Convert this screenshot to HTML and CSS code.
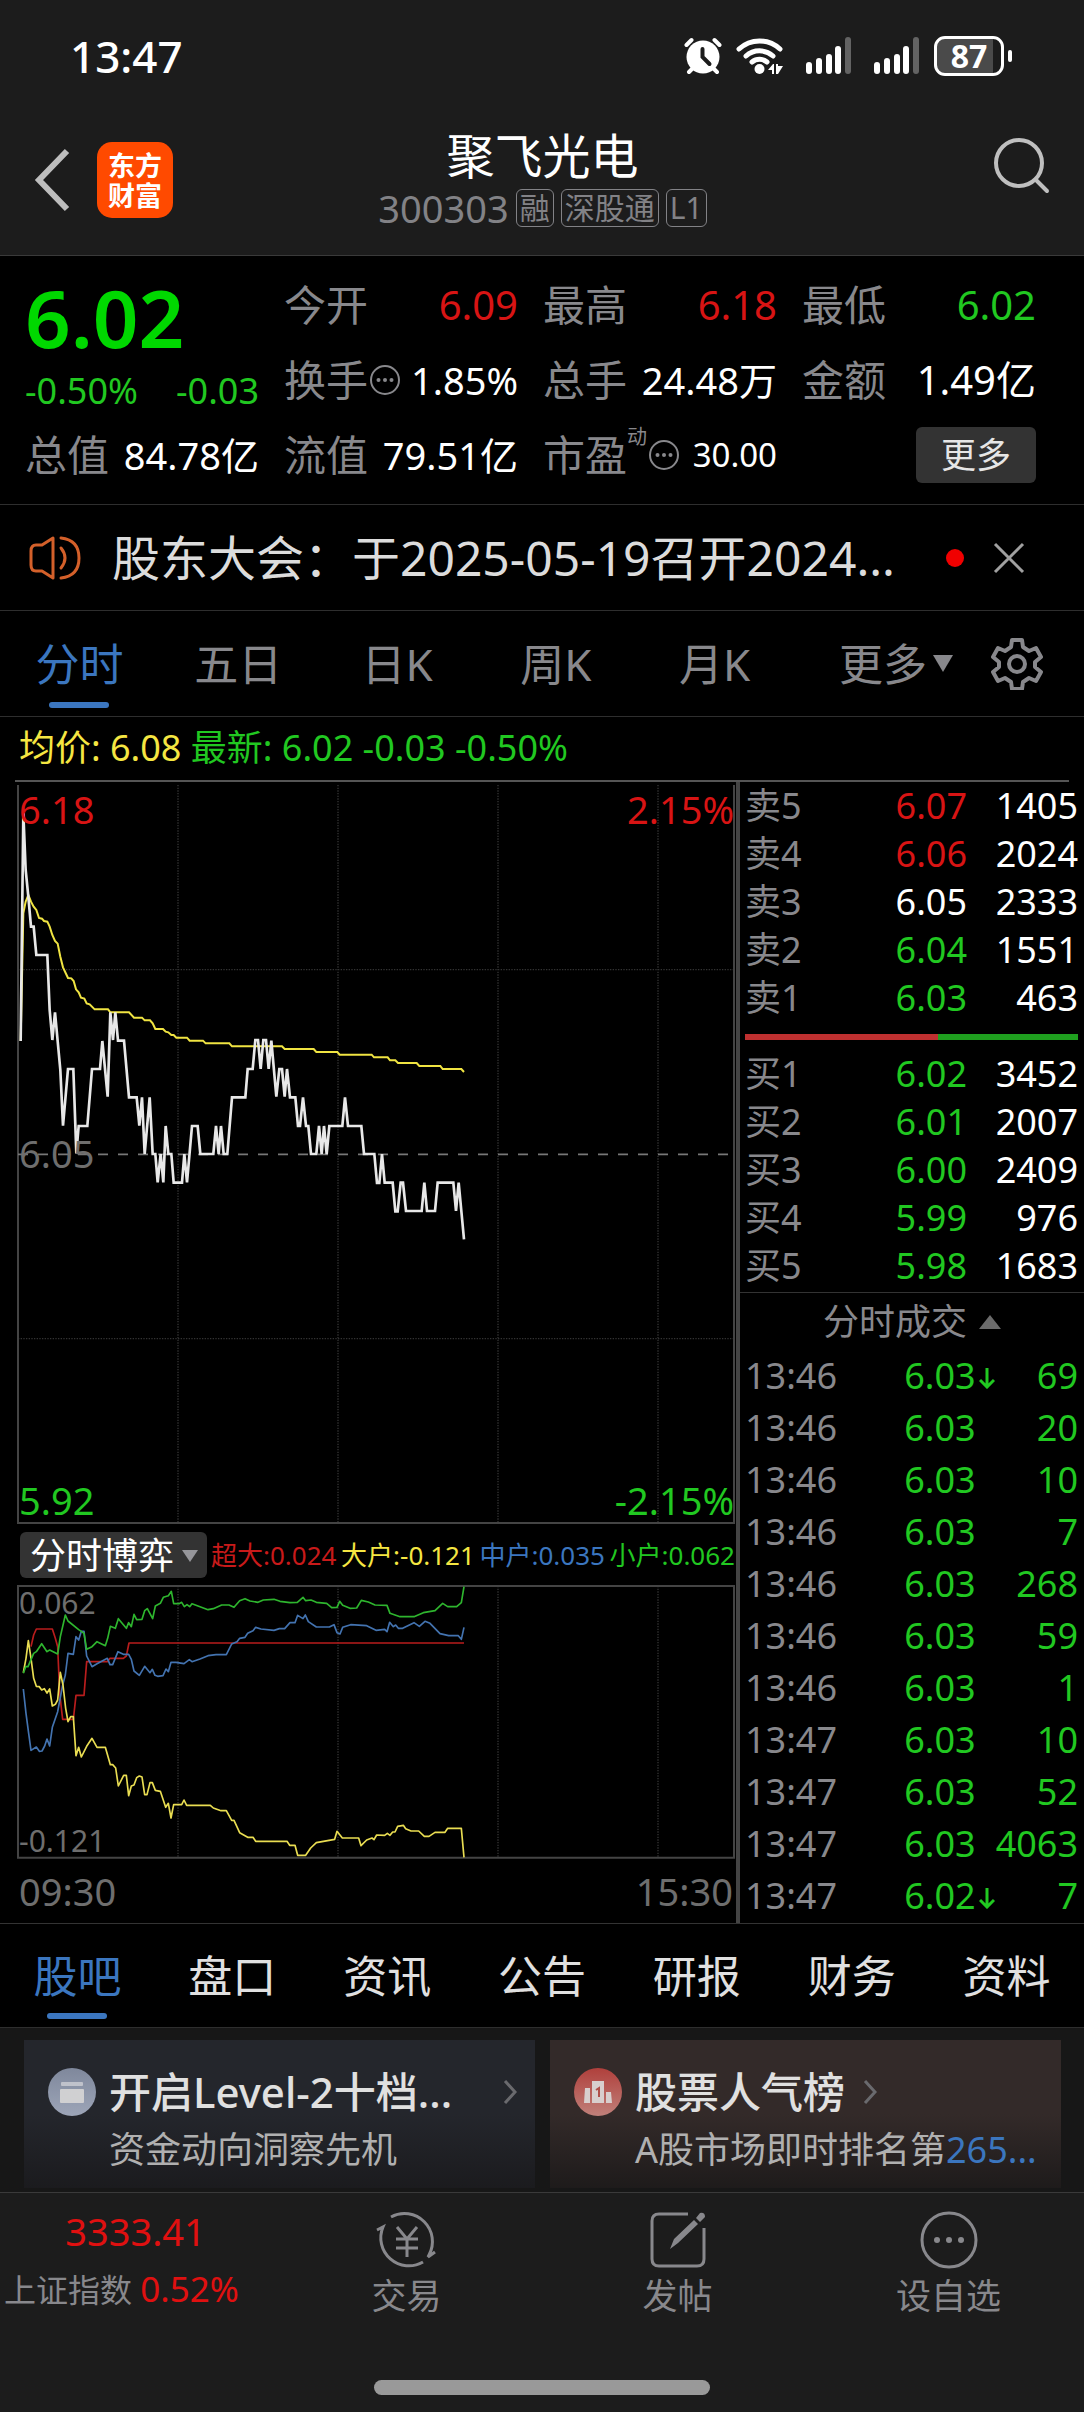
FILE: index.html
```html
<!DOCTYPE html>
<html lang="zh-CN">
<head>
<meta charset="utf-8">
<meta name="viewport" content="width=device-width, initial-scale=1">
<title>聚飞光电 300303</title>
<link rel="stylesheet" href="styles.css">
</head>
<body>
<div class="top">
  <div class="status">
    <time class="clock">13:47</time>
    <div class="status-icons">
      <svg width="38" height="38" viewBox="0 0 38 38" fill="none" stroke="#fff" stroke-width="4" stroke-linecap="round"><circle cx="19" cy="20" r="16.500" fill="#fff" stroke="none"/><path d="M2.500 8 7.500 3M35.500 8 30.500 3M8 32 5 35M30 32l3 3"/><path stroke="#1c1c1c" d="M18.500 12v8l7 7"/></svg>
      <svg width="48" height="38" viewBox="0 0 48 38" fill="none" stroke="#fff" stroke-width="5" stroke-linecap="round"><path d="M3 12a30 30 0 0 1 41 0M10 19a20 20 0 0 1 27 0M16 25a12 12 0 0 1 15 0"/><circle cx="23.500" cy="32" r="5" fill="#fff" stroke="none"/><path fill="#fff" stroke="none" d="M32 33l5-6h1v10h-2v-4zM40 27h2v2h5l-5 8h-2z"/></svg>
      <svg class="signal" width="46" height="38" viewBox="0 0 46 38" fill="#fff"><rect y="25" width="6" height="12" rx="3"/><rect x="10" y="21" width="6" height="16" rx="3"/><rect x="20" y="17" width="6" height="20" rx="3"/><rect x="29" y="9" width="6" height="28" rx="3"/><rect x="39" width="6" height="37" rx="3" fill="#636363"/></svg>
      <svg class="signal" width="46" height="38" viewBox="0 0 46 38" fill="#fff"><rect y="25" width="6" height="12" rx="3"/><rect x="10" y="21" width="6" height="16" rx="3"/><rect x="20" y="17" width="6" height="20" rx="3"/><rect x="29" y="9" width="6" height="28" rx="3"/><rect x="39" width="6" height="37" rx="3" fill="#636363"/></svg>
      <div class="battery">87</div>
    </div>
  </div>
  <header class="header">
    <div class="header-left">
      <button class="plain" aria-label="返回"><svg width="36" height="64" viewBox="0 0 36 64" fill="none" stroke="#bdbdbd" stroke-width="6"><path d="M33 3 5 32l28 29"/></svg></button>
      <div class="logo">东方<br>财富</div>
    </div>
    <div class="heading">
      <h1>聚飞光电</h1>
      <div class="code"><span>300303</span><span class="tag">融</span><span class="tag">深股通</span><span class="tag">L1</span></div>
    </div>
    <button class="plain search" aria-label="搜索"><svg width="58" height="58" viewBox="0 0 58 58" fill="none" stroke="#bfbfbf" stroke-width="4" stroke-linecap="round"><circle cx="26" cy="27" r="23"/><path d="M43 44l11 11"/></svg></button>
  </header>
</div>

<section class="quote">
  <div class="last">
    <strong>6.02</strong>
    <div class="change"><span>-0.50%</span><span>-0.03</span></div>
  </div>
  <div class="cell"><span>今开</span><b class="v40 up">6.09</b></div>
  <div class="cell"><span>最高</span><b class="v40 up">6.18</b></div>
  <div class="cell"><span>最低</span><b class="v40 down">6.02</b></div>
  <div class="cell"><span>换手</span><svg class="info" width="32" height="32" viewBox="0 0 32 32"><circle cx="16" cy="16" r="14" fill="none" stroke="#88888c" stroke-width="2"/><g fill="#88888c"><circle cx="9.500" cy="16" r="2"/><circle cx="16" cy="16" r="2"/><circle cx="22.500" cy="16" r="2"/></g></svg><b class="v38">1.85%</b></div>
  <div class="cell"><span>总手</span><b class="v38">24.48万</b></div>
  <div class="cell"><span>金额</span><b class="v40">1.49亿</b></div>
  <div class="cell"><span>总值</span><b class="v38">84.78亿</b></div>
  <div class="cell"><span>流值</span><b class="v38">79.51亿</b></div>
  <div class="cell"><span>市盈</span><sup>动</sup><svg class="info" width="32" height="32" viewBox="0 0 32 32"><circle cx="16" cy="16" r="14" fill="none" stroke="#88888c" stroke-width="2"/><g fill="#88888c"><circle cx="9.500" cy="16" r="2"/><circle cx="16" cy="16" r="2"/><circle cx="22.500" cy="16" r="2"/></g></svg><b class="v33">30.00</b></div>
  <div class="cell"><button class="more">更多</button></div>
</section>

<section class="notice">
  <svg width="52" height="46" viewBox="0 0 52 46" fill="none" stroke="#d4602a" stroke-width="3" stroke-linejoin="round" stroke-linecap="round"><path d="M24 3v40L13 36H7q-5 0-5-6V16q0-6 5-6h6z"/><path d="M32 13q8 10 0 20M32 3q18 2 18 20T32 43"/></svg>
  <a href="#notice">股东大会：于2025-05-19召开2024...</a>
  <i class="dot"></i>
  <button class="plain" aria-label="关闭"><svg width="32" height="32" viewBox="0 0 32 32" stroke="#a0a0a0" stroke-width="3"><path d="M2 2l28 28M30 2 2 30"/></svg></button>
</section>

<nav class="periods">
  <button class="tab active">分时</button>
  <button class="tab">五日</button>
  <button class="tab">日K</button>
  <button class="tab">周K</button>
  <button class="tab">月K</button>
  <button class="tab menu">更多<svg width="20" height="17" viewBox="0 0 20 17"><path d="M0 0h20L10 17z" fill="#88888c"/></svg></button>
  <button class="plain gear" aria-label="设置"><svg width="52" height="52" viewBox="0 0 52 52" fill="none" stroke="#88888c" stroke-width="4" stroke-linejoin="round"><path d="M21 2h10l1 7 6 4 7-3 5 9-6 5v5l6 5-5 9-7-3-6 4-1 7H21l-1-7-6-4-7 3-5-9 6-5v-5l-6-5 5-9 7 3 6-4z"/><circle cx="26" cy="26" r="8"/></svg></button>
</nav>

<div class="summary"><span class="avg">均价: 6.08</span> 最新: 6.02 -0.03 -0.50%</div>

<main class="market">
  <div class="charts">
    <figure class="plot price">
      <svg viewBox="51 15 2154 2217" fill="none">
        <g stroke="#333" stroke-width="4" stroke-dasharray="4 4"><path d="M534 15V2228M1014 15V2228M1494 15V2228M1974 15V2228M54 569H2202M54 1676H2202"/></g>
        <path d="M54 15V2229H2202V15" stroke="#444" stroke-width="6"/>
        <path d="M54 1123H2202" stroke="#777" stroke-width="5" stroke-dasharray="30 30"/>
        <path d="M62 783 70 400 77 365 85 345 93 365 101 380 109 390 117 414 126 416 132 423 142 425 149 440 157 465 165 483 173 491 181 530 189 562 204 594 214 595 221 603 228 628 236 637 243 653 253 656 260 670 269 673 284 688H324L331 697H387L402 713H426L434 721H450L458 730 466 747H489L497 755 505 757 514 765H521L529 773H561L569 782H609L617 790H688L696 799H846L854 807H941L949 816H1012L1019 824H1115L1122 832H1163L1170 841H1186L1194 849H1250L1258 858H1321L1328 867H1384L1392 876" stroke="#f0e442" stroke-width="6"/>
        <path d="M62 783 70 100 77 270 85 350 93 440H101L109 525H142L149 690 157 780 165 697 181 870 189 1037 204 867H220L229 1120 236 1038H262L276 867H300L307 783 323 950 331 697 339 780 346 697 354 782H372L387 952H410L418 1037 426 952 434 1122 449 952 458 1122H466L473 1207 482 1122 490 1207 497 1038 505 1122H514L521 1208H546L553 1122 561 1207 576 1038H593L601 1122H640L648 1038 656 1122 663 1038 671 1122H682L696 952H736L743 867H758L766 780H774L782 867 790 780H798L806 867 814 782 829 950 838 867H846L854 950 861 867 870 952H886L894 1038H900L909 952 918 1038H925L933 1122H949L957 1038 965 1122 972 1038 980 1122 988 1038H1027L1035 952 1044 1038H1084L1092 1122H1123L1131 1209H1138L1146 1122 1154 1208H1178L1186 1294H1193L1202 1208H1209L1218 1293H1265L1273 1208 1281 1293H1305L1313 1208H1360L1368 1293 1376 1208 1392 1378" stroke="#e8e8e8" stroke-width="8"/>
      </svg>
      <span class="label tl up">6.18</span><span class="label tr up">2.15%</span>
      <span class="label ml">6.05</span>
      <span class="label bl down">5.92</span><span class="label br down">-2.15%</span>
    </figure>
    <div class="flow">
      <label class="picker"><select aria-label="指标"><option>分时博弈</option></select><svg width="16" height="12" viewBox="0 0 16 12"><path d="M0 0h16L8 12z" fill="#96969a"/></svg></label>
      <div class="flow-values"><span class="red">超大:0.024</span><span class="avg">大户:-0.121</span><span class="blue">中户:0.035</span><span class="down">小户:0.062</span></div>
    </div>
    <figure class="plot game">
      <svg viewBox="21 135 2154 822" fill="none">
        <g stroke="#333" stroke-width="4" stroke-dasharray="4 4"><path d="M504 138V952M984 138V952M1464 138V952M1944 138V952"/></g>
        <path d="M24 138H2172V953H24Z" stroke="#444" stroke-width="6"/>
        <g stroke-width="5" stroke-linejoin="round">
          <path stroke="#b91d1d" d="M63 320 71 285 79 267H127L136 295 143 320 149 460 158 538H190L198 466H222L230 365H292L300 355H340L349 348 357 309H1362"/>
          <path stroke="#4373b0" d="M40 447 48 520 56 580 63 631 79 621 88 634 96 633 104 618 111 597 119 618 127 562 143 515 158 435 166 405 174 340 190 343 198 290 206 300 214 274 222 274 230 348 246 380 261 371 292 355 300 374H308L324 335 340 343H356L364 358 372 393 388 406 404 379 420 398 427 388 435 406 443 409 459 407 468 387 475 395 483 367H498L522 371 538 359 546 365 570 357 594 347 618 344H649L665 312 681 305 689 295 705 292 713 280 729 272 737 262 753 267 792 271 808 266 824 266 840 248H855L863 226 879 236 886 225 895 245 919 261H958L972 254 981 278 990 282 998 262 1022 254 1070 257 1098 271 1124 268 1131 275 1139 247 1150 260 1157 255 1165 265 1178 265 1212 248 1228 259 1245 244 1260 250 1290 281 1316 287 1345 287 1354 298 1362 262"/>
          <path stroke="#e9dd52" d="M40 398 48 355 55 302 63 355 71 415 79 439 88 440 95 450 103 446 111 459 119 447 127 498 136 493 143 480 151 397 159 435 167 505 174 545 182 530H190L198 647 206 622 214 651 230 619 246 595 261 622H286L301 674H308L317 684 325 738 341 706H349L356 767 364 738 372 735 380 713 388 708 396 711 404 764H411L420 728H427L436 751 451 754 467 802 475 790 483 834 491 794H515L522 780 530 796H601L610 804 633 812H649L665 841H672L689 878 713 892 729 892 737 904H831L839 916H855L863 946H887L902 924 919 908 974 898 981 874 997 894H1046L1053 917 1070 900 1086 894 1092 899 1100 885 1124 886 1132 880 1140 886 1148 876 1155 876 1163 859 1180 856 1187 866 1203 873H1226L1243 889 1257 889 1275 877H1305L1313 865H1354L1362 952"/>
          <path stroke="#2eb52e" d="M40 400 47 380H54L71 340 79 335 95 311 111 335 119 330 143 342 151 290 166 225 174 243 206 269 214 274 222 280 230 328 246 320 261 305 286 317 293 295 301 259 316 265 325 236 349 265 356 248 364 260 372 223 380 239 396 238 404 212 412 206 428 236 436 198 451 190 460 172 475 167 484 154 491 191H507L515 187 523 200 531 194 539 200 546 191 562 197 594 209 610 206 635 195 657 195 672 202 689 182 705 176 720 183 744 187 760 180 792 178 810 184 840 188 862 187 879 172 887 182 903 180 919 187 950 190 965 203 981 202 989 184 998 196 1020 205 1040 204 1054 181 1075 186 1095 195 1131 196 1140 220 1170 230 1212 230 1240 218 1275 212 1298 190 1313 200 1340 200 1354 188 1362 140"/>
        </g>
      </svg>
      <span class="label small tl">0.062</span><span class="label small bl">-0.121</span>
    </figure>
    <div class="hours"><span>09:30</span><span>15:30</span></div>
  </div>

  <aside class="book">
    <table class="depth">
      <tr><th>卖5</th><td class="up">6.07</td><td>1405</td></tr>
      <tr><th>卖4</th><td class="up">6.06</td><td>2024</td></tr>
      <tr><th>卖3</th><td>6.05</td><td>2333</td></tr>
      <tr><th>卖2</th><td class="down">6.04</td><td>1551</td></tr>
      <tr><th>卖1</th><td class="down">6.03</td><td>463</td></tr>
    </table>
    <div class="ratio"><i style="width:58%"></i></div>
    <table class="depth">
      <tr><th>买1</th><td class="down">6.02</td><td>3452</td></tr>
      <tr><th>买2</th><td class="down">6.01</td><td>2007</td></tr>
      <tr><th>买3</th><td class="down">6.00</td><td>2409</td></tr>
      <tr><th>买4</th><td class="down">5.99</td><td>976</td></tr>
      <tr><th>买5</th><td class="down">5.98</td><td>1683</td></tr>
    </table>
    <button class="deals-title">分时成交<svg width="22" height="14" viewBox="0 0 22 14"><path d="M11 0l11 14H0z" fill="#6b6b6b"/></svg></button>
    <table class="deals">
      <tr><th>13:46</th><td>6.03<svg width="16" height="22" viewBox="0 0 16 22"><path d="M8 1v18M1 13l7 7 7-7"/></svg></td><td>69</td></tr>
      <tr><th>13:46</th><td>6.03</td><td>20</td></tr>
      <tr><th>13:46</th><td>6.03</td><td>10</td></tr>
      <tr><th>13:46</th><td>6.03</td><td>7</td></tr>
      <tr><th>13:46</th><td>6.03</td><td>268</td></tr>
      <tr><th>13:46</th><td>6.03</td><td>59</td></tr>
      <tr><th>13:46</th><td>6.03</td><td>1</td></tr>
      <tr><th>13:47</th><td>6.03</td><td>10</td></tr>
      <tr><th>13:47</th><td>6.03</td><td>52</td></tr>
      <tr><th>13:47</th><td>6.03</td><td>4063</td></tr>
      <tr><th>13:47</th><td>6.02<svg width="16" height="22" viewBox="0 0 16 22"><path d="M8 1v18M1 13l7 7 7-7"/></svg></td><td>7</td></tr>
    </table>
  </aside>
</main>

<nav class="sections">
  <button class="tab active">股吧</button>
  <button class="tab">盘口</button>
  <button class="tab">资讯</button>
  <button class="tab">公告</button>
  <button class="tab">研报</button>
  <button class="tab">财务</button>
  <button class="tab">资料</button>
</nav>

<section class="cards">
  <a class="card cool" href="#level2">
    <svg width="48" height="48" viewBox="0 0 48 48"><defs><linearGradient id="cool" x2="0" y2="1"><stop stop-color="#7f889c"/><stop offset="1" stop-color="#9da5b8"/></linearGradient></defs><circle cx="24" cy="24" r="24" fill="url(#cool)"/><rect x="13" y="14" width="22" height="4" rx="1" fill="#bfc2cb"/><rect x="12" y="21" width="24" height="14" rx="1" fill="#d0d0d2"/></svg>
    <div class="card-text"><h2><span>开启Level-2十档...</span><svg class="end" width="14" height="26" viewBox="0 0 14 26"><path d="M2 2l10 11L2 24"/></svg></h2><p>资金动向洞察先机</p></div>
  </a>
  <a class="card warm" href="#rank">
    <svg width="48" height="48" viewBox="0 0 48 48"><defs><linearGradient id="warm" x2="0" y2="1"><stop stop-color="#b0403c"/><stop offset="1" stop-color="#c0807a"/></linearGradient></defs><circle cx="24" cy="24" r="24" fill="url(#warm)"/><path d="M11 20h5v15h-6zM18 13h12v22H18zM32 24h5l1 11h-6z" fill="#d8cfce"/><path d="M22 22l3-2v9" fill="none" stroke="#b0504a" stroke-width="2"/></svg>
    <div class="card-text"><h2><span>股票人气榜</span><svg width="14" height="26" viewBox="0 0 14 26"><path d="M2 2l10 11L2 24"/></svg></h2><p>A股市场即时排名第<span class="blue">265...</span></p></div>
  </a>
</section>

<footer class="dock">
  <a class="index" href="#index"><b>3333.41</b><span>上证指数 <em>0.52%</em></span></a>
  <a class="action" href="#trade"><svg width="64" height="60" viewBox="0 0 64 60" fill="none" stroke="#88888c" stroke-width="3"><path d="M16 7a28 28 0 0 1 38 38l-1 2 7-5M48 52A28 28 0 0 1 8 17l-6 3"/><path d="M22 17l10 12 10-12M32 29v18M21 29h22M21 38h22"/></svg>交易</a>
  <a class="action" href="#post"><svg width="64" height="60" viewBox="0 0 64 60" fill="none" stroke="#88888c" stroke-width="3"><path d="M42 4H13q-7 0-7 7v38q0 7 7 7h38q7 0 7-7V18"/><path fill="#88888c" stroke="none" d="M24 39l4-10 20-19 4 4-20 19zM50 8l4-5q5-1 5 4l-5 5z"/></svg>发帖</a>
  <a class="action" href="#watch"><svg width="64" height="60" viewBox="0 0 64 60"><circle cx="32" cy="30" r="27" fill="none" stroke="#88888c" stroke-width="3"/><g fill="#88888c"><circle cx="20" cy="30" r="3"/><circle cx="32" cy="30" r="3"/><circle cx="44" cy="30" r="3"/></g></svg>设自选</a>
  <div class="home"></div>
</footer>
</body>
</html>
```
FILE: styles.css
```css
* { box-sizing: border-box; }

body {
  margin: 0;
  background: #000;
  color: #fff;
  font-family: "Noto Sans", "Noto Sans CJK SC", sans-serif;
  font-size: 36px;
  line-height: 48px;
}

h1, h2, p, figure { margin: 0; font-weight: 400; }
b, em, i, th { font-weight: 400; font-style: normal; }
a { color: inherit; text-decoration: none; }
svg { display: block; flex: none; }
table { width: 100%; border-collapse: collapse; table-layout: fixed; }
th, td { padding: 0; text-align: right; }
th { text-align: left; color: #88888c; }

button, select {
  border: 0;
  padding: 0;
  background: none;
  color: inherit;
  font: inherit;
}
.plain { display: block; }

.up { color: #d81414; }
.down { color: #21c821; }
.avg { color: #f5e642; }
.blue { color: #3b76bf; }
.red { color: #c81a1a; }

/* Status bar and title */
.top { background: #1c1c1c; border-bottom: 1px solid #3a3a3a; }
.status {
  display: flex;
  align-items: center;
  justify-content: space-between;
  height: 112px;
  padding: 0 80px 0 70px;
}
.clock { font-size: 44px; font-weight: 500; }
.status-icons { display: flex; align-items: center; gap: 14px; }
.signal { margin-left: 8px; }
.battery {
  position: relative;
  width: 70px;
  height: 40px;
  border: 3px solid #fff;
  border-radius: 11px;
  background: linear-gradient(90deg, #4a4a4a 88%, #1c1c1c 88%);
  font-size: 32px;
  font-weight: 700;
  line-height: 34px;
  text-align: center;
}
.battery::after {
  content: "";
  position: absolute;
  top: 11px;
  right: -11px;
  width: 4px;
  height: 12px;
  border-radius: 2px;
  background: #fff;
}
.header {
  display: grid;
  grid-template-columns: 1fr auto 1fr;
  height: 143px;
  padding: 16px 33px 0 34px;
}
.header-left { display: flex; align-items: center; gap: 27px; height: 104px; }
.logo {
  width: 76px;
  padding: 8px 0;
  border-radius: 15px;
  background: #ff4a00;
  font-family: "Noto Sans CJK SC", sans-serif;
  font-size: 27px;
  font-weight: 700;
  line-height: 30px;
  text-align: center;
}
.heading { text-align: center; }
h1 { font-size: 48px; line-height: 56px; }
.code {
  display: flex;
  align-items: center;
  gap: 7px;
  color: #828286;
  font-size: 38px;
}
.tag {
  padding: 0 3px;
  border: 1px solid #828286;
  border-radius: 6px;
  font-size: 30px;
  line-height: 36px;
}
.search { justify-self: end; padding-top: 8px; align-self: start; }

/* Quote figures */
.quote {
  display: grid;
  grid-template-columns: repeat(4, minmax(0, 1fr));
  grid-template-rows: repeat(3, 75px);
  column-gap: 25px;
  padding: 11px 48px 12px 25px;
  border-bottom: 1px solid #2e2e2e;
}
.last { grid-row: span 2; color: #21c821; }
.last strong {
  display: block;
  color: #00d800;
  font-size: 80px;
  font-weight: 600;
  line-height: 100px;
}
.change { display: flex; justify-content: space-between; }
.cell { display: flex; align-items: center; }
.cell > span { color: #88888c; font-size: 42px; }
.cell b { margin-left: auto; }
.cell sup {
  align-self: flex-start;
  color: #88888c;
  font-size: 20px;
  line-height: 40px;
}
.info { margin-left: 1px; }
.v40 { font-size: 40px; }
.v38 { font-size: 38px; }
.v33 { font-size: 33px; }
.more {
  width: 120px;
  margin-left: auto;
  border-radius: 6px;
  background: #333;
  color: #e6e6e6;
  font-size: 35px;
  line-height: 56px;
}

/* Notice */
.notice {
  display: flex;
  align-items: center;
  height: 106px;
  padding: 0 59px 0 29px;
  border-bottom: 1px solid #2e2e2e;
}
.notice a { flex: 1; margin-left: 31px; color: #dcdcdc; font-size: 48px; white-space: nowrap; }
.dot { width: 18px; height: 18px; margin-right: 29px; border-radius: 50%; background: #f00000; }

/* Tab bars */
.periods, .sections { display: flex; border-bottom: 1px solid #2e2e2e; }
.periods { padding-right: 41px; color: #88888c; }
.periods .gear { margin: auto 0 auto 25px; }
.tab {
  position: relative;
  display: flex;
  flex: 1;
  align-items: center;
  justify-content: center;
  height: 105px;
  font-size: 44px;
  white-space: nowrap;
}
.tab.menu { justify-content: flex-end; padding-right: 13px; }
.tab svg { margin-left: 6px; }
.tab.active { color: #3b76bf; }
.tab.active::after {
  content: "";
  position: absolute;
  bottom: 8px;
  left: calc(50% - 30px);
  width: 60px;
  height: 6px;
  border-radius: 3px;
  background: #3b76bf;
}
.sections { color: #e0e0e0; }
.sections .tab { height: 103px; }

.summary {
  margin: 0 15px;
  padding: 7px 4px 8px;
  border-bottom: 2px solid #555;
  color: #21c821;
}

/* Charts and order book */
.market {
  display: grid;
  grid-template-columns: 740fr 344fr;
  border-bottom: 1px solid #333;
}
.charts { padding: 3px 1px 0 17px; border-right: 4px solid #444; }
.plot { position: relative; }
.plot svg { width: 100%; height: auto; }
.label { position: absolute; font-size: 38px; }
.label.small { font-size: 30px; line-height: 36px; }
.label:not(.up, .down) { color: #6e6e6e; }
.tl { top: 0; left: 2px; }
.tr { top: 0; right: 1px; }
.ml { top: calc(50% - 26px); left: 2px; }
.bl { bottom: 0; left: 2px; }
.br { bottom: 0; right: 1px; }
.flow { display: flex; align-items: center; gap: 4px; height: 61px; }
.picker { position: relative; margin-left: 3px; }
.picker select {
  display: block;
  width: 187px;
  height: 46px;
  padding-left: 10px;
  border-radius: 6px;
  background: #333;
  appearance: none;
}
.picker svg { position: absolute; top: 18px; right: 9px; }
.flow-values { display: flex; flex: 1; justify-content: space-between; font-size: 26px; white-space: nowrap; }
.hours {
  display: flex;
  align-items: center;
  justify-content: space-between;
  height: 64px;
  padding: 0 2px;
  color: #6e6e6e;
  font-size: 38px;
}
.depth th, .depth td { height: 48px; }
.depth th { width: 36%; padding-left: 5px; }
.depth td:last-child, .deals td:last-child { padding-right: 6px; }
.depth td:nth-child(2) { width: 30%; }
.ratio { margin: 12px 6px 10px 5px; background: #1fa01f; }
.ratio i { display: block; height: 6px; background: #bf3030; }
.deals-title {
  display: flex;
  align-items: center;
  justify-content: center;
  gap: 12px;
  width: 100%;
  height: 58px;
  margin-top: 2px;
  border-top: 1px solid #333;
  color: #88888c;
}
.deals { color: #21c821; }
.deals th, .deals td { height: 52px; }
.deals th { width: 30%; padding-left: 5px; }
.deals td:nth-child(2) { width: 42%; padding-left: 61px; text-align: left; white-space: nowrap; }
.deals svg { display: inline-block; margin-left: 3px; fill: none; stroke: #21c821; stroke-width: 3; }

/* Promotion cards */
.cards {
  display: grid;
  grid-template-columns: repeat(2, minmax(0, 1fr));
  gap: 15px;
  padding: 12px 23px 4px 24px;
  border-bottom: 1px solid #3a3a3a;
  background: #171717;
}
.card { display: flex; gap: 13px; height: 148px; padding: 28px 18px 0 24px; }
.cool { background: linear-gradient(#24262c 50%, #1b1b1e); }
.warm { background: linear-gradient(#332a29 50%, #1e1b1b); }
.card-text { flex: 1; min-width: 0; }
.card h2 {
  display: flex;
  align-items: center;
  gap: 18px;
  color: #e0e0e0;
  font-size: 42px;
  font-weight: 500;
}
.card h2 svg { fill: none; stroke: #6a6a6e; stroke-width: 3; }
.card .end { margin-left: auto; }
.card p { padding-top: 10px; color: #b0b0b0; white-space: nowrap; }

/* Bottom dock */
.dock {
  display: grid;
  grid-template-columns: repeat(4, minmax(0, 1fr));
  align-items: start;
  padding: 14px 0 18px;
  background: #1c1c1c;
}
.index { display: flex; flex-direction: column; gap: 10px; color: #88888c; font-size: 32px; white-space: nowrap; }
.index span { padding-left: 4px; }
.index b { font-size: 38px; text-align: center; }
.index b, .index em { color: #e01010; }
.index em { font-size: 35px; }
.action {
  display: flex;
  flex-direction: column;
  align-items: center;
  padding-top: 3px;
  color: #88888c;
  font-size: 35px;
}
.action svg { margin-bottom: 2px; }
.home {
  grid-column: 1 / -1;
  justify-self: center;
  width: 31%;
  height: 15px;
  margin-top: 60px;
  border-radius: 8px;
  background: #999;
}
```
